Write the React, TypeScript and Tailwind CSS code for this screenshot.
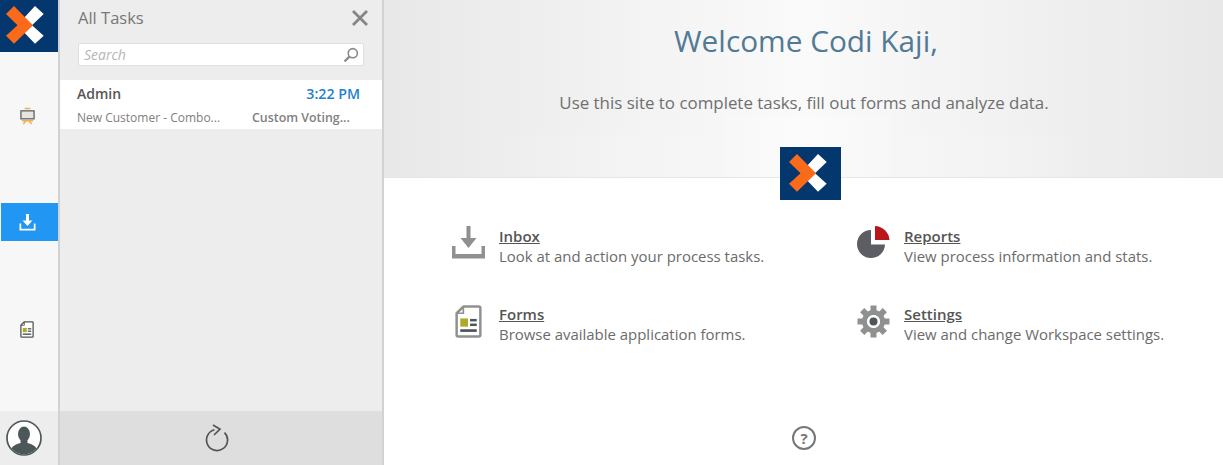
import type { ReactNode } from 'react';

function LogoMark({ className }: { className: string }) {
  return (
    <svg className={className} viewBox="0 0 38 38">
      <path d="M29 0 L37.7 8 L26 19.3 L37.7 29.8 L29 37.8 L17 25.3 L22 19.3 L17 13 Z" fill="#fff" />
      <path d="M8 0 L27 19.3 L8 37.8 L0 29.8 L11.5 19.3 L0 8 Z" fill="#f96a1b" />
    </svg>
  );
}

function FormIcon({ className, stroke, accent, line }: { className: string; stroke: string; accent: string; line: string }) {
  return (
    <svg className={className} viewBox="0 0 26 32">
      <path d="M8 1.5 H23 a1.5 1.5 0 0 1 1.5 1.5 V29 a1.5 1.5 0 0 1 -1.5 1.5 H3 a1.5 1.5 0 0 1 -1.5 -1.5 V8 Z" fill="#fff" stroke={stroke} strokeWidth="2.4" strokeLinejoin="round" />
      <path d="M8 2 V8 H2" fill="none" stroke={stroke} strokeWidth="1.6" />
      <rect x="5" y="13" width="7.5" height="8" fill={accent} />
      <rect x="14.5" y="13.5" width="6.5" height="2.4" fill={line} />
      <rect x="14.5" y="18" width="6.5" height="2.4" fill={line} />
      <rect x="5" y="23.5" width="16" height="2.6" fill={line} />
    </svg>
  );
}

function InboxIcon() {
  return (
    <svg className="h-[33px] w-[33px]" viewBox="0 0 33 33" fill="#8f9090">
      <rect x="14.5" y="0" width="4" height="14" />
      <path d="M8.5 12 H24.5 L16.5 22 Z" />
      <path d="M0 20 H3.5 V28 H29.5 V20 H33 V32.5 H0 Z" />
    </svg>
  );
}

function PieIcon() {
  return (
    <svg className="h-[33px] w-[33px]" viewBox="0 0 33 33">
      <path d="M14 4 A14 14 0 1 0 28 18.5 H14 Z" fill="#5d5d64" />
      <path d="M18 0 A15 15 0 0 1 32.5 14 H18 Z" fill="#b9161c" />
    </svg>
  );
}

function GearIcon() {
  const teeth = [0, 45, 90, 135, 180, 225, 270, 315];
  return (
    <svg className="h-[33px] w-[33px]" viewBox="0 0 33 33">
      {teeth.map((deg) => (
        <rect key={deg} x="13.5" y="0.5" width="6" height="8" fill="#8f9090" transform={`rotate(${deg} 16.5 16.5)`} />
      ))}
      <circle cx="16.5" cy="16.5" r="9" fill="none" stroke="#8f9090" strokeWidth="5" />
      <circle cx="16.5" cy="16.5" r="6.5" fill="#fff" />
      <circle cx="16.5" cy="16.5" r="4" fill="#4c5759" />
    </svg>
  );
}

function Tile({ icon, title, text }: { icon: ReactNode; title: string; text: string }) {
  return (
    <div className="flex h-[40px]">
      <div className="mt-[1px] w-[47px] shrink-0">{icon}</div>
      <div className="pt-[1px]">
        <div className="text-[15px] leading-[20px] font-semibold text-[#555] underline">{title}</div>
        <div className="text-[14.95px] leading-[20px] text-[#6b6b6b]">{text}</div>
      </div>
    </div>
  );
}

export default function App() {
  return (
    <div className="flex h-[465px] w-[1223px] overflow-hidden bg-white font-['Open_Sans',sans-serif]">
      {/* rail */}
      <div className="flex h-full w-[60px] shrink-0 flex-col border-r-2 border-[#d2d2d2] bg-[#f7f7f7] pl-px">
        <div className="-ml-px h-[52px] w-[58px] shrink-0 bg-[#03376e] pt-[6px] pl-[6px]">
          <LogoMark className="h-[38px] w-[38px]" />
        </div>
        <div className="flex h-[151px] shrink-0 items-start justify-center pt-[55px] pr-[5px]">
          <svg className="h-[18px] w-[15px]" viewBox="0 0 16 18">
            <path d="M5 1 H11" stroke="#eeb050" strokeWidth="1.6" fill="none" />
            <rect x="1" y="3.5" width="14" height="8.5" fill="#e4e4e4" stroke="#6a6e6e" strokeWidth="1.5" />
            <path d="M2 14 H14 M3.5 17.5 L6.5 14 M12.5 17.5 L9.5 14" stroke="#eeb050" strokeWidth="1.5" fill="none" />
          </svg>
        </div>
        <div className="flex h-[38px] w-[57px] shrink-0 items-center justify-center bg-[#2196f3] pr-[5px]">
          <svg className="h-[17px] w-[17px]" viewBox="0 0 17 17" fill="#fff">
            <rect x="7" y="0" width="3" height="7" />
            <path d="M3.5 6.5 H13.5 L8.5 12 Z" />
            <path d="M0.5 9.5 H2.2 V14.8 H14.8 V9.5 H16.5 V16.5 H0.5 Z" />
          </svg>
        </div>
        <div className="flex h-[170px] shrink-0 items-start justify-center pt-[80px] pr-[5px]">
          <FormIcon className="h-[17px] w-[14px]" stroke="#4c5759" accent="#b0aa28" line="#4c5759" />
        </div>
        <div className="-ml-px flex flex-1 items-center bg-[#ededed] pl-[6px]">
          <svg className="h-[36px] w-[36px]" viewBox="0 0 36 36">
            <defs>
              <clipPath id="avatar">
                <circle cx="18" cy="18" r="16.2" />
              </clipPath>
            </defs>
            <circle cx="18" cy="18" r="17" fill="#fff" stroke="#4c5759" strokeWidth="1.7" />
            <g clipPath="url(#avatar)" fill="#4c5759">
              <ellipse cx="18" cy="14" rx="6" ry="7.5" />
              <path d="M14.5 20 H21.5 V23 C26 24.5 30 25.5 31 30 V36 H5 V30 C6 25.5 10 24.5 14.5 23 Z" />
            </g>
          </svg>
        </div>
      </div>

      {/* task list */}
      <div className="flex h-full w-[324px] shrink-0 flex-col border-r-2 border-[#d2d2d2] bg-[#ededed]">
        <div className="flex h-[36px] shrink-0 items-center justify-between pr-[14px] pl-[18px]">
          <span className="text-[16.5px] text-[#777]">All Tasks</span>
          <svg className="h-[16px] w-[16px]" viewBox="0 0 16 16" stroke="#858585" strokeWidth="2.8">
            <path d="M1 1 L15 15 M15 1 L1 15" />
          </svg>
        </div>
        <div className="mt-[7px] ml-[18px] flex h-[23px] w-[286px] shrink-0 items-center justify-between rounded-[2px] border border-[#e0e0e0] bg-white pr-[4px] pl-[5px]">
          <span className="text-[14px] text-[#b5b5b5] italic">Search</span>
          <svg className="h-[16px] w-[16px]" viewBox="0 0 16 16" fill="none" stroke="#888">
            <circle cx="9.8" cy="6.2" r="4.6" strokeWidth="1.6" />
            <path d="M6.4 9.6 L1.5 14.5" strokeWidth="2.2" />
          </svg>
        </div>
        <div className="mt-[14px] h-[49px] shrink-0 bg-white pt-[3px] pr-[22px] pl-[17px]">
          <div className="flex items-center justify-between leading-[22px]">
            <span className="text-[14px] font-semibold text-[#555]">Admin</span>
            <span className="text-[14.2px] font-semibold text-[#1e81ce]">3:22 PM</span>
          </div>
          <div className="mt-[3px] flex text-[12px] leading-[20px] text-[#808080]">
            <span className="w-[175px]">New Customer - Combo...</span>
            <span className="text-[12.4px] font-semibold whitespace-nowrap">Custom Voting...</span>
          </div>
        </div>
        <div className="flex-1" />
        <div className="flex h-[54px] shrink-0 items-center justify-center bg-[#dedede] pr-[8px]">
          <svg className="h-[28px] w-[24px]" viewBox="0 0 24 28" fill="none" stroke="#555" strokeWidth="1.7">
            <path d="M9.5 5.8 A10.5 10.5 0 1 0 19.5 8.6" />
            <path d="M8 1 L15 5.2 L9 11" />
          </svg>
        </div>
      </div>

      {/* main */}
      <div className="flex min-w-0 flex-1 flex-col">
        <div className="relative h-[178px] shrink-0 border-b border-[#e6e6e6] bg-gradient-to-r from-[#e8e8e8] via-[#fafafa] to-[#e8e8e8] text-center">
          <div className="absolute top-[135px] right-[150px] bottom-0 left-[113px] bg-white/5" />
          <div className="absolute top-[115px] bottom-0 left-[340px] w-[167px] bg-white/20" />
          <h1 className="relative pt-[21px] pl-[5px] text-[29.8px] leading-[40px] font-normal text-[#527a94]">Welcome Codi Kaji,</h1>
          <p className="relative pt-[31px] pl-[1px] text-[16.9px] leading-[22px] text-[#6f6f6f]">Use this site to complete tasks, fill out forms and analyze data.</p>
          <div className="absolute top-[147px] left-[396px] h-[53px] w-[61px] bg-[#03376e] pt-[7px] pl-[9px]">
            <LogoMark className="h-[38px] w-[38px]" />
          </div>
        </div>
        <div className="grid grid-cols-[405px_1fr] gap-y-[38px] pt-[47px] pl-[68px]">
          <Tile icon={<InboxIcon />} title="Inbox" text="Look at and action your process tasks." />
          <Tile icon={<PieIcon />} title="Reports" text="View process information and stats." />
          <Tile icon={<div className="pt-[1px] pl-[3px]"><FormIcon className="h-[33px] w-[27px]" stroke="#8f9090" accent="#b0aa28" line="#4c5759" /></div>} title="Forms" text="Browse available application forms." />
          <Tile icon={<div className="pt-[1px]"><GearIcon /></div>} title="Settings" text="View and change Workspace settings." />
        </div>
        <div className="mt-[83px] flex justify-center pl-[1px]">
          <div className="flex h-[24px] w-[24px] items-center justify-center rounded-full border-2 border-[#777] text-[15px] leading-none font-bold text-[#777]">?</div>
        </div>
      </div>
    </div>
  );
}
